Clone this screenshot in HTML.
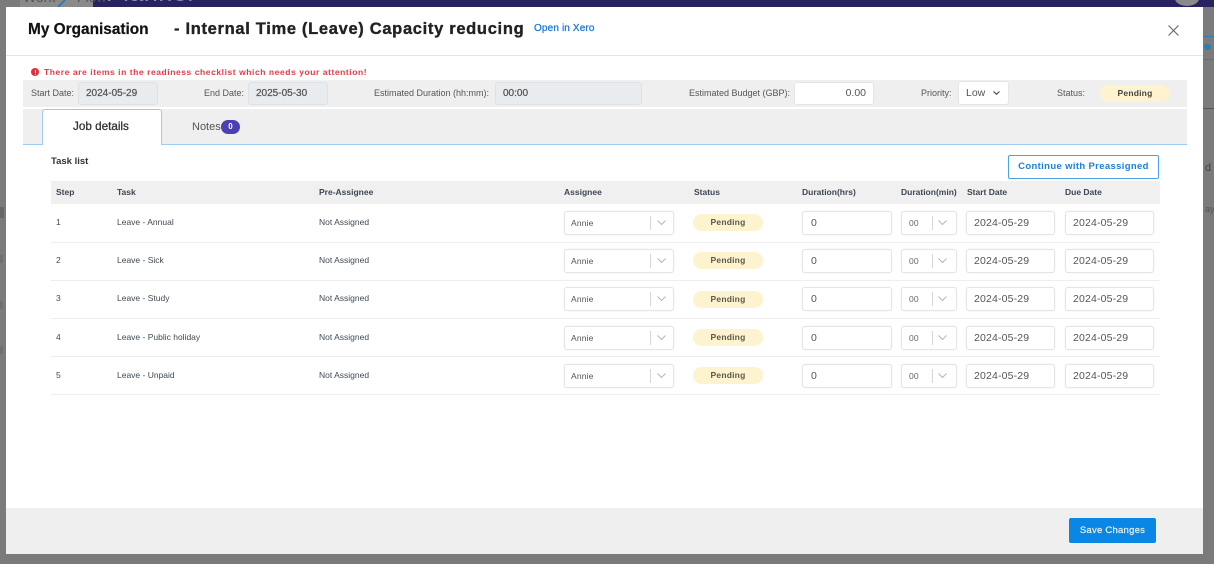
<!DOCTYPE html>
<html><head><meta charset="utf-8">
<style>
html,body{margin:0;padding:0;width:1214px;height:564px;overflow:hidden;background:#7b7b7b}
body{font-family:"Liberation Sans",sans-serif;position:relative;color:#3a3a3a}
#w{position:absolute;left:0;top:0;width:1214px;height:564px;filter:blur(.35px)}
#w div,#w span,#w svg{position:absolute;white-space:nowrap}
.l{font-size:9px;color:#555;line-height:12px}
.h{font-size:8.5px;font-weight:bold;color:#3c4654;top:186px;line-height:12px}
.t{font-size:8.5px;color:#3f4a55;line-height:12px}
.b{background:#fff;border:1px solid #e3e5e8;box-shadow:0 0 1px #dfe1e4;border-radius:3px;box-sizing:border-box;font-size:10.5px;color:#555;line-height:22px;padding-left:7px;letter-spacing:.15px}
.s{font-size:8.5px;padding-left:6px}
.p{background:#fdf3cf;border-radius:9px;width:70px;height:17px;line-height:17px;text-align:center;font-size:8.5px;font-weight:bold;color:#5a5a48;letter-spacing:.2px}
.sep{left:51px;width:1109px;height:1px;background:#eceef0}
.d{background:#d5d8db;width:1px}
.ro{background:#e9ecef;border:1px solid #dee2e6;border-radius:3px;box-sizing:border-box;font-size:10px;color:#555;line-height:21px;padding-left:7px;-webkit-text-stroke:.25px #555}
</style></head><body><div id="w">
<div style="left:93px;top:0;width:1121px;height:7px;background:#292260"></div>
<div style="left:20px;top:0;width:73px;height:7px;background:#8a8a8a"></div>
<div style="left:23px;top:-10px;font-size:14px;line-height:14px;color:#555">Work</div>
<div style="left:77px;top:-10px;font-size:14px;line-height:14px;color:#555">Flow</div>
<svg style="left:56px;top:0" width="20" height="7" viewBox="0 0 20 7"><path d="M2 7L9 0" stroke="#1b74c8" stroke-width="1.5" fill="none"/></svg>
<div style="left:106px;top:-19px;font-size:25px;line-height:24px;color:#8f8cb4;letter-spacing:.6px">Planner</div>
<div style="left:1175px;top:-9px;width:24px;height:15px;border-radius:50%;background:#8a8a8a"></div>
<div style="left:1203px;top:36px;width:11px;height:1px;background:#2a7fb0"></div>
<div style="left:1203px;top:59px;width:11px;height:1px;background:#2a7fb0"></div>
<div style="left:1203px;top:108px;width:11px;height:1px;background:#555"></div>
<div style="left:1204px;top:44px;width:7px;height:6px;border-radius:4px;background:#2a7fb0"></div>
<div style="left:1205px;top:162px;font-size:11px;line-height:12px;color:#444">d</div>
<div style="left:1205px;top:203px;font-size:9px;line-height:12px;color:#555">ays</div>
<div style="left:0;top:207px;width:4px;height:11px;background:#666"></div>
<div style="left:0;top:255px;width:3px;height:8px;background:#707070"></div>
<div style="left:0;top:301px;width:3px;height:8px;background:#707070"></div>
<div style="left:0;top:346px;width:3px;height:8px;background:#707070"></div>

<div style="left:6px;top:7px;width:1197px;height:547px;background:#fff"></div>
<div style="left:6px;top:55px;width:1197px;height:1px;background:#e3e5e8"></div>
<div style="left:6px;top:508px;width:1197px;height:46px;background:#efefef"></div>

<div style="left:28px;top:20px;font-size:15.4px;font-weight:bold;color:#111;line-height:20px;-webkit-text-stroke:.2px #111">My Organisation</div>
<div style="left:174px;top:19px;font-size:16.5px;font-weight:bold;color:#222;line-height:20px;letter-spacing:.68px;-webkit-text-stroke:.35px #222">- Internal Time (Leave) Capacity reducing</div>
<div style="left:534px;top:22px;font-size:10px;color:#1b74d8;line-height:14px;-webkit-text-stroke:.25px #1b74d8;letter-spacing:.14px">Open in Xero</div>
<svg style="left:1167px;top:24px" width="13" height="13" viewBox="0 0 13 13"><path d="M1.5 1.5L11.5 11.5M11.5 1.5L1.5 11.5" stroke="#666" stroke-width="1.1" fill="none"/></svg>

<div style="left:31px;top:68px;width:8px;height:8px;border-radius:50%;background:#e0313f"></div>
<div style="left:34.5px;top:69.5px;width:1px;height:3px;background:#fff"></div>
<div style="left:34.5px;top:73.5px;width:1px;height:1px;background:#fff"></div>
<div style="left:44px;top:66px;font-size:8.5px;font-weight:bold;color:#e5394a;line-height:12px;letter-spacing:.56px">There are items in the readiness checklist which needs your attention!</div>

<div style="left:23px;top:80px;width:1164px;height:27px;background:#efefef"></div>
<div class="l" style="left:31px;top:87px">Start Date:</div>
<div class="ro" style="left:78px;top:82px;width:80px;height:23px">2024-05-29</div>
<div class="l" style="left:204px;top:87px">End Date:</div>
<div class="ro" style="left:248px;top:82px;width:80px;height:23px">2025-05-30</div>
<div class="l" style="left:374px;top:87px">Estimated Duration (hh:mm):</div>
<div class="ro" style="left:495px;top:82px;width:147px;height:23px">00:00</div>
<div class="l" style="left:689px;top:87px">Estimated Budget (GBP):</div>
<div style="left:794px;top:82px;width:80px;height:23px;background:#fff;border:1px solid #e2e5e9;border-radius:3px;box-sizing:border-box;font-size:10.5px;color:#555;line-height:21px;text-align:right;padding-right:7px">0.00</div>
<div class="l" style="left:921px;top:87px">Priority:</div>
<div style="left:958px;top:81px;width:51px;height:24px;background:#fff;border:1px solid #e2e5e9;border-radius:3px;box-sizing:border-box;font-size:10.5px;color:#555;line-height:22px;padding-left:7px">Low</div>
<svg style="left:992px;top:90px" width="9" height="6" viewBox="0 0 9 6"><path d="M1.5 1.5L4.5 4.2L7.5 1.5" stroke="#444" stroke-width="1.1" fill="none"/></svg>
<div class="l" style="left:1057px;top:87px">Status:</div>
<div class="p" style="left:1100px;top:85px;height:17px;color:#444">Pending</div>

<div style="left:23px;top:109px;width:1164px;height:35px;background:#efefef"></div>
<div style="left:23px;top:144px;width:1164px;height:1px;background:#9ccaf2"></div>
<div style="left:42px;top:109px;width:120px;height:36px;background:#fff;border:1px solid #9ccaf2;border-bottom:none;border-radius:3px 3px 0 0;box-sizing:border-box"></div>
<div style="left:73px;top:120px;font-size:11.7px;color:#333;line-height:14px;-webkit-text-stroke:.3px #333">Job details</div>
<div style="left:192px;top:120px;font-size:11px;color:#555;line-height:14px">Notes</div>
<div style="left:221px;top:120px;width:19px;height:14px;border-radius:7px;background:#4f3fb5;color:#fff;font-size:8px;font-weight:bold;line-height:14px;text-align:center">0</div>

<div style="left:51px;top:155px;font-size:9.5px;font-weight:bold;color:#333;line-height:13px">Task list</div>
<div style="left:1008px;top:155px;width:151px;height:24px;background:#fff;border:1px solid #4ba3ea;border-radius:2px;box-sizing:border-box;color:#1b7fdc;font-size:9.5px;font-weight:bold;line-height:22px;text-align:center;letter-spacing:.35px">Continue with Preassigned</div>

<div style="left:51px;top:181px;width:1109px;height:23px;background:#f0f0f0"></div>
<div class="h" style="left:56px">Step</div>
<div class="h" style="left:117px">Task</div>
<div class="h" style="left:319px">Pre-Assignee</div>
<div class="h" style="left:564px">Assignee</div>
<div class="h" style="left:694px">Status</div>
<div class="h" style="left:802px">Duration(hrs)</div>
<div class="h" style="left:901px">Duration(min)</div>
<div class="h" style="left:967px">Start Date</div>
<div class="h" style="left:1065px">Due Date</div>

<!-- row 1 -->
<div class="t" style="left:56px;top:216px">1</div>
<div class="t" style="left:117px;top:216px">Leave - Annual</div>
<div class="t" style="left:319px;top:216px">Not Assigned</div>
<div class="b s" style="left:564px;top:211px;width:110px;height:24px">Annie</div>
<div class="d" style="left:650px;top:216px;height:14px"></div>
<svg style="left:656px;top:219px" width="11" height="8" viewBox="0 0 11 8"><path d="M1.5 1.5L5.5 5.5L9.5 1.5" stroke="#b5b5b5" fill="none"/></svg>
<div class="p" style="left:693px;top:214px">Pending</div>
<div class="b" style="left:802px;top:211px;width:90px;height:24px;padding-left:8px">0</div>
<div class="b s" style="left:901px;top:211px;width:56px;height:24px;padding-left:7px;color:#667">00</div>
<div class="d" style="left:932px;top:216px;height:14px"></div>
<svg style="left:937px;top:219px" width="11" height="8" viewBox="0 0 11 8"><path d="M1.5 1.5L5.5 5.5L9.5 1.5" stroke="#b5b5b5" fill="none"/></svg>
<div class="b" style="left:966px;top:211px;width:89px;height:24px">2024-05-29</div>
<div class="b" style="left:1065px;top:211px;width:89px;height:24px">2024-05-29</div>
<div class="sep" style="top:242px"></div>

<!-- row 2 -->
<div class="t" style="left:56px;top:254px">2</div>
<div class="t" style="left:117px;top:254px">Leave - Sick</div>
<div class="t" style="left:319px;top:254px">Not Assigned</div>
<div class="b s" style="left:564px;top:249px;width:110px;height:24px">Annie</div>
<div class="d" style="left:650px;top:254px;height:14px"></div>
<svg style="left:656px;top:257px" width="11" height="8" viewBox="0 0 11 8"><path d="M1.5 1.5L5.5 5.5L9.5 1.5" stroke="#b5b5b5" fill="none"/></svg>
<div class="p" style="left:693px;top:252px">Pending</div>
<div class="b" style="left:802px;top:249px;width:90px;height:24px;padding-left:8px">0</div>
<div class="b s" style="left:901px;top:249px;width:56px;height:24px;padding-left:7px;color:#667">00</div>
<div class="d" style="left:932px;top:254px;height:14px"></div>
<svg style="left:937px;top:257px" width="11" height="8" viewBox="0 0 11 8"><path d="M1.5 1.5L5.5 5.5L9.5 1.5" stroke="#b5b5b5" fill="none"/></svg>
<div class="b" style="left:966px;top:249px;width:89px;height:24px">2024-05-29</div>
<div class="b" style="left:1065px;top:249px;width:89px;height:24px">2024-05-29</div>
<div class="sep" style="top:280px"></div>

<!-- row 3 -->
<div class="t" style="left:56px;top:292px">3</div>
<div class="t" style="left:117px;top:292px">Leave - Study</div>
<div class="t" style="left:319px;top:292px">Not Assigned</div>
<div class="b s" style="left:564px;top:287px;width:110px;height:24px">Annie</div>
<div class="d" style="left:650px;top:292px;height:14px"></div>
<svg style="left:656px;top:295px" width="11" height="8" viewBox="0 0 11 8"><path d="M1.5 1.5L5.5 5.5L9.5 1.5" stroke="#b5b5b5" fill="none"/></svg>
<div class="p" style="left:693px;top:291px">Pending</div>
<div class="b" style="left:802px;top:287px;width:90px;height:24px;padding-left:8px">0</div>
<div class="b s" style="left:901px;top:287px;width:56px;height:24px;padding-left:7px;color:#667">00</div>
<div class="d" style="left:932px;top:292px;height:14px"></div>
<svg style="left:937px;top:295px" width="11" height="8" viewBox="0 0 11 8"><path d="M1.5 1.5L5.5 5.5L9.5 1.5" stroke="#b5b5b5" fill="none"/></svg>
<div class="b" style="left:966px;top:287px;width:89px;height:24px">2024-05-29</div>
<div class="b" style="left:1065px;top:287px;width:89px;height:24px">2024-05-29</div>
<div class="sep" style="top:318px"></div>

<!-- row 4 -->
<div class="t" style="left:56px;top:331px">4</div>
<div class="t" style="left:117px;top:331px">Leave - Public holiday</div>
<div class="t" style="left:319px;top:331px">Not Assigned</div>
<div class="b s" style="left:564px;top:326px;width:110px;height:24px">Annie</div>
<div class="d" style="left:650px;top:331px;height:14px"></div>
<svg style="left:656px;top:334px" width="11" height="8" viewBox="0 0 11 8"><path d="M1.5 1.5L5.5 5.5L9.5 1.5" stroke="#b5b5b5" fill="none"/></svg>
<div class="p" style="left:693px;top:329px">Pending</div>
<div class="b" style="left:802px;top:326px;width:90px;height:24px;padding-left:8px">0</div>
<div class="b s" style="left:901px;top:326px;width:56px;height:24px;padding-left:7px;color:#667">00</div>
<div class="d" style="left:932px;top:331px;height:14px"></div>
<svg style="left:937px;top:334px" width="11" height="8" viewBox="0 0 11 8"><path d="M1.5 1.5L5.5 5.5L9.5 1.5" stroke="#b5b5b5" fill="none"/></svg>
<div class="b" style="left:966px;top:326px;width:89px;height:24px">2024-05-29</div>
<div class="b" style="left:1065px;top:326px;width:89px;height:24px">2024-05-29</div>
<div class="sep" style="top:356px"></div>

<!-- row 5 -->
<div class="t" style="left:56px;top:369px">5</div>
<div class="t" style="left:117px;top:369px">Leave - Unpaid</div>
<div class="t" style="left:319px;top:369px">Not Assigned</div>
<div class="b s" style="left:564px;top:364px;width:110px;height:24px">Annie</div>
<div class="d" style="left:650px;top:369px;height:14px"></div>
<svg style="left:656px;top:372px" width="11" height="8" viewBox="0 0 11 8"><path d="M1.5 1.5L5.5 5.5L9.5 1.5" stroke="#b5b5b5" fill="none"/></svg>
<div class="p" style="left:693px;top:367px">Pending</div>
<div class="b" style="left:802px;top:364px;width:90px;height:24px;padding-left:8px">0</div>
<div class="b s" style="left:901px;top:364px;width:56px;height:24px;padding-left:7px;color:#667">00</div>
<div class="d" style="left:932px;top:369px;height:14px"></div>
<svg style="left:937px;top:372px" width="11" height="8" viewBox="0 0 11 8"><path d="M1.5 1.5L5.5 5.5L9.5 1.5" stroke="#b5b5b5" fill="none"/></svg>
<div class="b" style="left:966px;top:364px;width:89px;height:24px">2024-05-29</div>
<div class="b" style="left:1065px;top:364px;width:89px;height:24px">2024-05-29</div>
<div class="sep" style="top:394px"></div>

<div style="left:1069px;top:518px;width:87px;height:25px;background:#0a86e4;border-radius:2px;color:#e6f3fd;font-size:9.5px;line-height:25px;text-align:center;letter-spacing:.25px;-webkit-text-stroke:.2px #e6f3fd">Save Changes</div>
</div></body></html>
